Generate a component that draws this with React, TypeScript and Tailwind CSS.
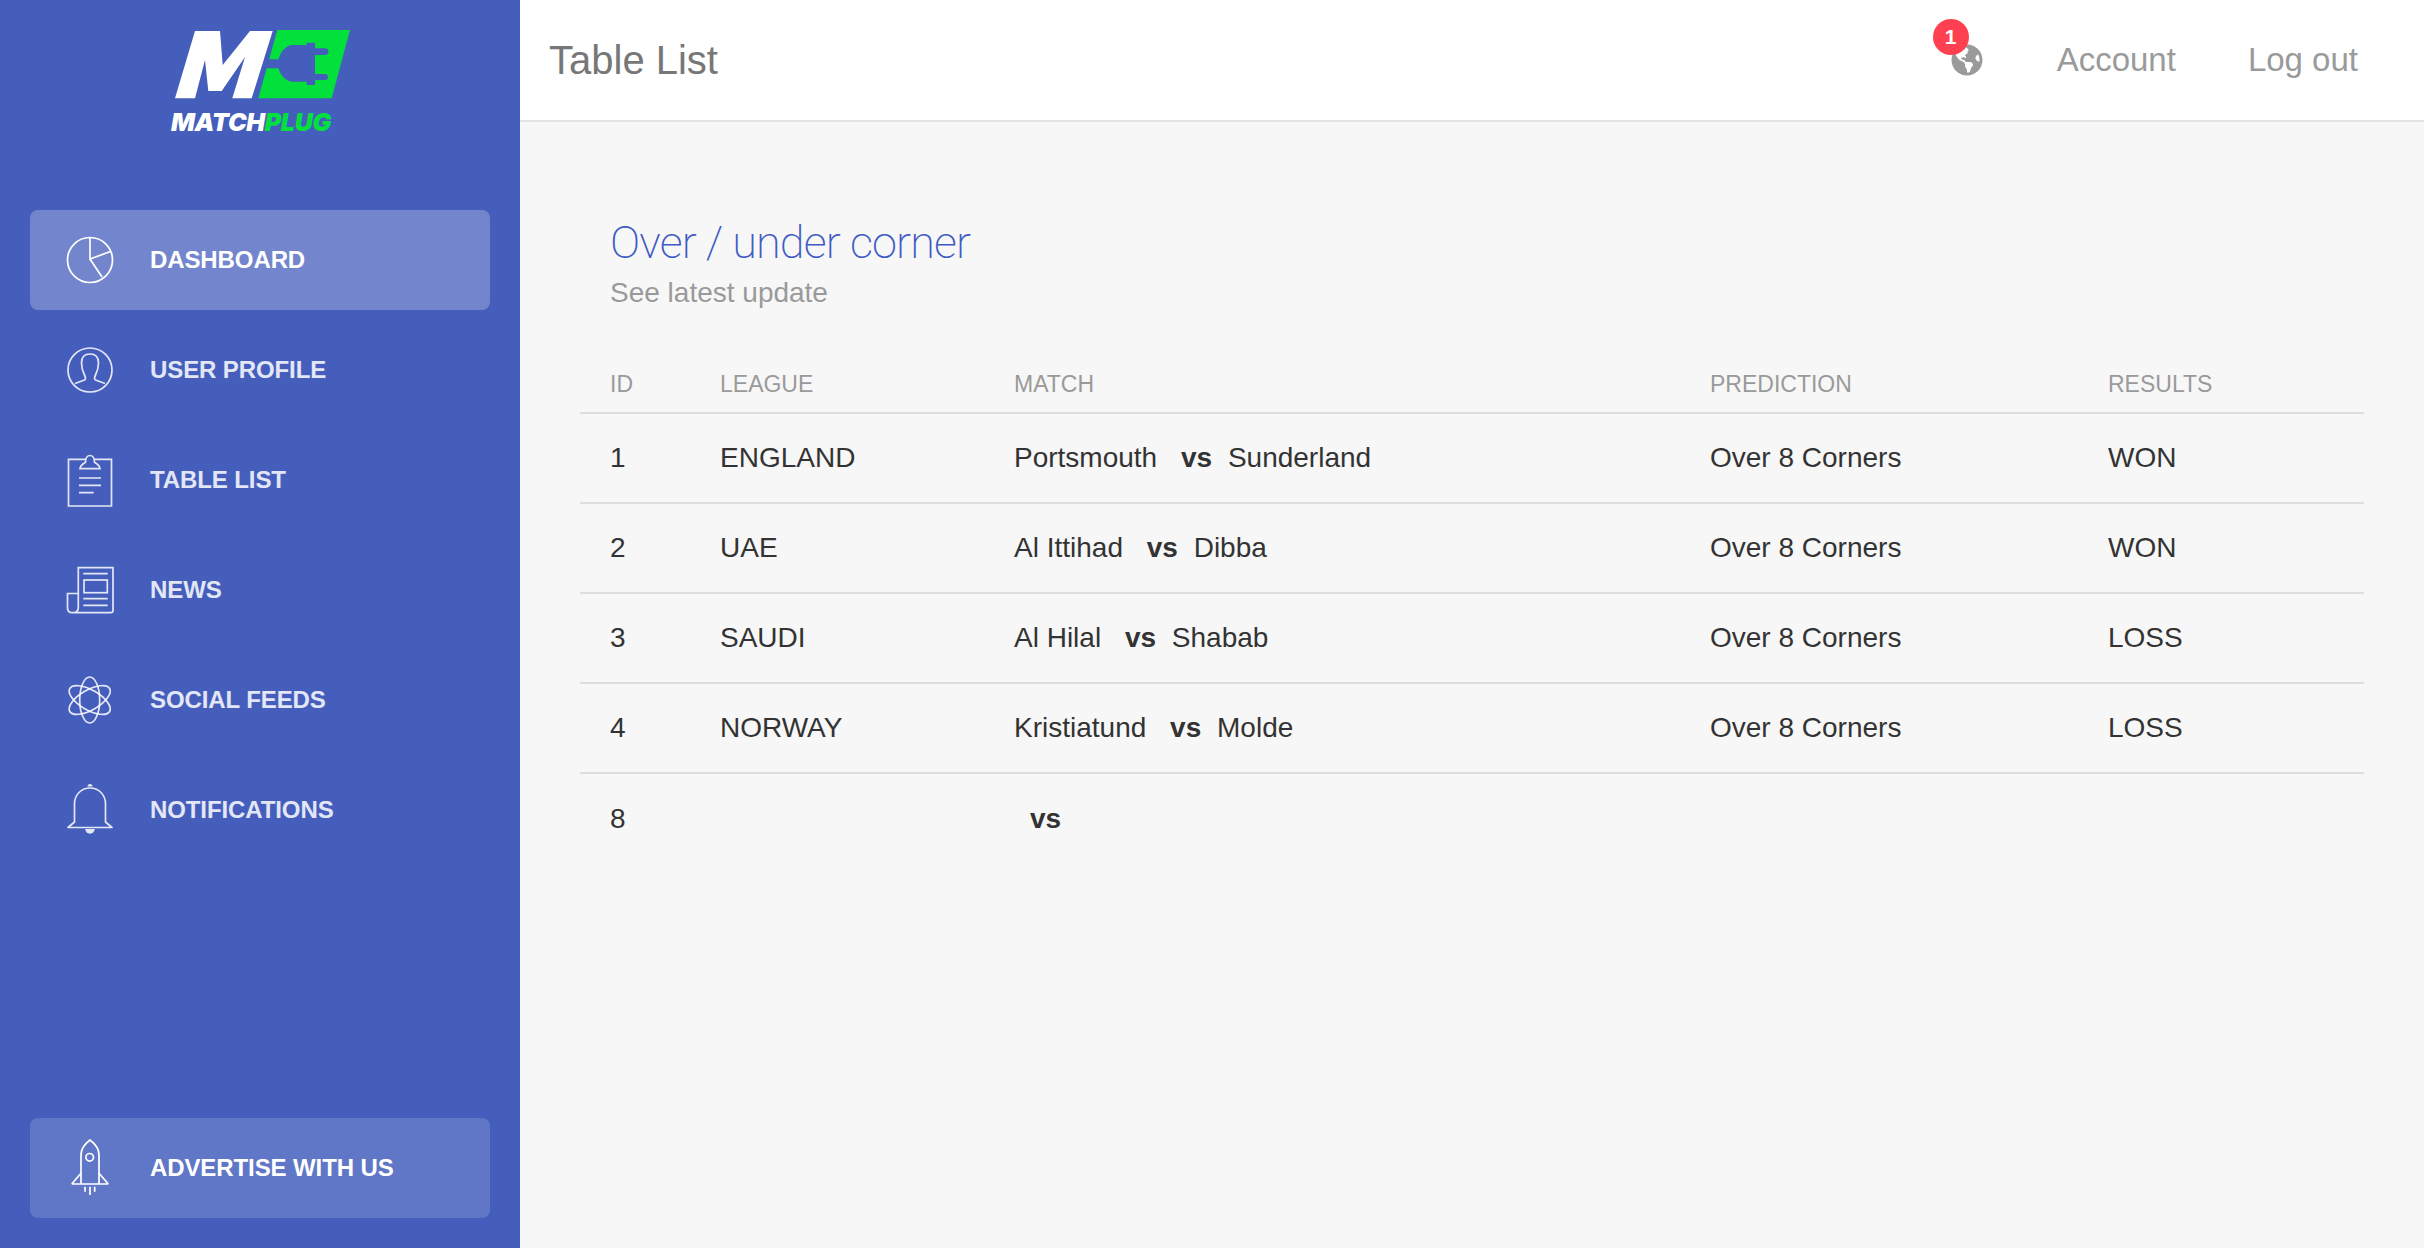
import React from 'react';
import { FaGlobeAmericas } from 'react-icons/fa';

const sans = "font-['Liberation_Sans',Arial,sans-serif]";

function Icon({ children }: { children: React.ReactNode }) {
  return (
    <svg viewBox="0 0 60 60" className="w-[60px] h-[60px] shrink-0" fill="none" stroke="currentColor" strokeWidth="1.7">
      {children}
    </svg>
  );
}

const PieIcon = () => (
  <Icon>
    <circle cx="30" cy="30" r="22.5" />
    <path d="M30 7.500V29l20.500-7.500M30 29l12 18" />
  </Icon>
);

const UserIcon = () => (
  <Icon>
    <circle cx="30" cy="30" r="22" />
    <path d="M15 43.500l9.500-3.500c1.500-.6 1-3 0-5-2-4-3-8-3-12 0-6 3.500-9 8.500-9s8.500 3 8.500 9c0 4-1 8-3 12-1 2-1.500 4.400 0 5l9.500 3.500" />
  </Icon>
);

const ClipboardIcon = () => (
  <Icon>
    <path d="M25.500 9.300H8.500V56h43V9.300H34.500" />
    <path d="M20 18.700c0-3 3-5 5.500-6.500 0-4 2-6.700 4.500-6.700s4.500 2.700 4.500 6.700c2.500 1.500 5.500 3.500 5.500 6.500z" />
    <path d="M19 28h22M19 35.300h22M19 42.700h14.700" />
  </Icon>
);

const NewsIcon = () => (
  <Icon>
    <path d="M18.300 33.500V7.700H53v42.800c0 1.300-1 2.200-2.200 2.200H12.500c-3 0-5-2-5-5V33.500h10.800v14.200c0 3-2 5-5.800 5" />
    <rect x="24" y="20" width="23.300" height="12.700" />
    <path d="M23.300 13.700h24.400M23.300 38.700h24.400M23.300 45.300h24.400" />
  </Icon>
);

const AtomIcon = () => (
  <Icon>
    <ellipse cx="29.700" cy="30" rx="10" ry="23" />
    <ellipse cx="29.700" cy="30" rx="10" ry="23" transform="rotate(60 29.700 30)" />
    <ellipse cx="29.700" cy="30" rx="10" ry="23" transform="rotate(-60 29.700 30)" />
  </Icon>
);

const BellIcon = () => (
  <Icon>
    <path d="M8 47.500L14.500 42V24C14.500 14 22 8 30 8s15.500 6 15.500 16v18l6.500 5.500z" strokeLinejoin="round" />
    <path d="M27.500 6.500a2.500 2.500 0 0 1 5 0z" fill="currentColor" stroke="none" />
    <path d="M25.300 49h9.400a4.700 4.700 0 0 1-9.400 0z" fill="currentColor" stroke="none" />
  </Icon>
);

const RocketIcon = () => (
  <Icon>
    <path d="M21 46V17C21 10 26 5 30 2c4 3 9 8 9 15v29" />
    <circle cx="29.700" cy="19.300" r="3.800" />
    <path d="M11.700 46h36.600M21 35.300L11.700 46M39 35.300L48.300 46M25 48.700v5M30 48.700V57M34.700 48.700v5" />
  </Icon>
);

function Logo() {
  return (
    <div className="flex flex-col items-center h-[136px] pt-[30px]">
      <svg viewBox="175 30 175 69" className="w-[175px] h-[69px] ml-[4px] shrink-0">
        <path d="M195 31h25l2.700 34L250 31h22.700l-21 67.300h-19.400L245 57l-23.300 34h-13.400L205 60l-10 38.300h-20z" fill="#ffffff" />
        <path d="M277.300 30H350l-18.300 68.300h-73.400z" fill="#02e03c" />
        <path
          d="M268 59.300h10.500c2-8 8-14.300 14.500-14.300h13.700v-2.300H315v5.600h10.500c1.800 0 3 1.500 3 3.300s-1.200 3.400-3 3.400H315V74h10c1.800 0 3 1.300 3 3s-1.200 3-3 3h-10v5h-8.300v-3.300H293c-6.500 0-12.500-5.700-14.500-13.400H264z"
          fill="#455ebc"
        />
      </svg>
      <div className="mt-[12px] mr-[18px] font-['Inter',sans-serif] font-black italic text-[25px] leading-[22px] tracking-[-0.3px] text-white">
        MATCH<span className="text-[#02e03c]">PLUG</span>
      </div>
    </div>
  );
}

const navItems = [
  { label: 'DASHBOARD', icon: <PieIcon />, active: true },
  { label: 'USER PROFILE', icon: <UserIcon /> },
  { label: 'TABLE LIST', icon: <ClipboardIcon /> },
  { label: 'NEWS', icon: <NewsIcon /> },
  { label: 'SOCIAL FEEDS', icon: <AtomIcon /> },
  { label: 'NOTIFICATIONS', icon: <BellIcon /> },
];

const rows = [
  { id: 1, league: 'ENGLAND', home: 'Portsmouth', away: 'Sunderland', prediction: 'Over 8 Corners', result: 'WON' },
  { id: 2, league: 'UAE', home: 'Al Ittihad', away: 'Dibba', prediction: 'Over 8 Corners', result: 'WON' },
  { id: 3, league: 'SAUDI', home: 'Al Hilal', away: 'Shabab', prediction: 'Over 8 Corners', result: 'LOSS' },
  { id: 4, league: 'NORWAY', home: 'Kristiatund', away: 'Molde', prediction: 'Over 8 Corners', result: 'LOSS' },
  { id: 8, league: '', home: '', away: '', prediction: '', result: '' },
];

function Sidebar() {
  return (
    <aside className="w-[520px] h-[1248px] shrink-0 bg-[#455ebc] flex flex-col">
      <Logo />
      <nav className="mt-[74px] px-[30px] flex flex-col gap-[10px]">
        {navItems.map((item) => (
          <a
            key={item.label}
            className={`h-[100px] rounded-[8px] flex items-center pl-[30px] gap-[30px] ${
              item.active ? 'bg-white/25 text-white' : 'text-white/85'
            }`}
          >
            {item.icon}
            <span className="text-[24px] font-bold tracking-[-0.1px]">{item.label}</span>
          </a>
        ))}
      </nav>
      <div className="mt-auto px-[30px] pb-[30px]">
        <a className="h-[100px] rounded-[8px] bg-white/15 text-white flex items-center pl-[30px] gap-[30px]">
          <RocketIcon />
          <span className="text-[24px] font-bold tracking-[-0.1px]">ADVERTISE WITH US</span>
        </a>
      </div>
    </aside>
  );
}

function Header() {
  return (
    <header className="h-[122px] bg-white border-b-2 border-[#e3e3e3] flex items-center pl-[29px] pr-[66px]">
      <h1 className="text-[40px] text-[#777777]">Table List</h1>
      <div className="ml-auto flex items-center text-[#9a9a9a] text-[33px]">
        <div className="relative w-[32px] h-[32px] mr-[74px]">
          <FaGlobeAmericas className="w-[32px] h-[32px]" />
          <span className="absolute -top-[25px] -left-[18px] w-[36px] h-[36px] rounded-full bg-[#ff4050] text-white text-[21px] font-bold flex items-center justify-center">
            1
          </span>
        </div>
        <span>Account</span>
        <span className="ml-[72px]">Log out</span>
      </div>
    </header>
  );
}

export default function App() {
  return (
    <div className={`flex min-h-[1248px] bg-[#f7f7f7] ${sans}`}>
      <Sidebar />
      <main className="flex-1 flex flex-col">
        <Header />
        <section className="px-[60px] pt-[94px]">
          <div className="pl-[30px]">
            <h2 className="font-['Roboto',sans-serif] font-extralight text-[45px] leading-[54px] tracking-[-0.9px] text-[#3f5bc4]">
              Over / under corner
            </h2>
            <p className="text-[28px] leading-[40px] text-[#9a9a9a] mt-[3px]">See latest update</p>
          </div>
          <table className="w-full table-fixed mt-[30px] text-[28px] text-[#333333]">
            <colgroup>
              <col className="w-[110px]" />
              <col className="w-[294px]" />
              <col className="w-[696px]" />
              <col className="w-[398px]" />
              <col />
            </colgroup>
            <thead>
              <tr className="h-[70px] border-b-2 border-[#dddddd] text-[23px] text-[#9a9a9a]">
                <th className="pl-[30px] pb-[11px] align-bottom text-left font-normal">ID</th>
                <th className="pl-[30px] pb-[11px] align-bottom text-left font-normal">LEAGUE</th>
                <th className="pl-[30px] pb-[11px] align-bottom text-left font-normal">MATCH</th>
                <th className="pl-[30px] pb-[11px] align-bottom text-left font-normal">PREDICTION</th>
                <th className="pl-[30px] pb-[11px] align-bottom text-left font-normal">RESULTS</th>
              </tr>
            </thead>
            <tbody>
              {rows.map((row, i) => (
                <tr key={row.id} className={`h-[90px] ${i < rows.length - 1 ? 'border-b-2 border-[#dddddd]' : ''}`}>
                  <td className="pl-[30px]">{row.id}</td>
                  <td className="pl-[30px]">{row.league}</td>
                  <td className="pl-[30px]">
                    {row.home} <b className="ml-[16px] mr-[8px]">vs</b> {row.away}
                  </td>
                  <td className="pl-[30px]">{row.prediction}</td>
                  <td className="pl-[30px]">{row.result}</td>
                </tr>
              ))}
            </tbody>
          </table>
        </section>
      </main>
    </div>
  );
}
